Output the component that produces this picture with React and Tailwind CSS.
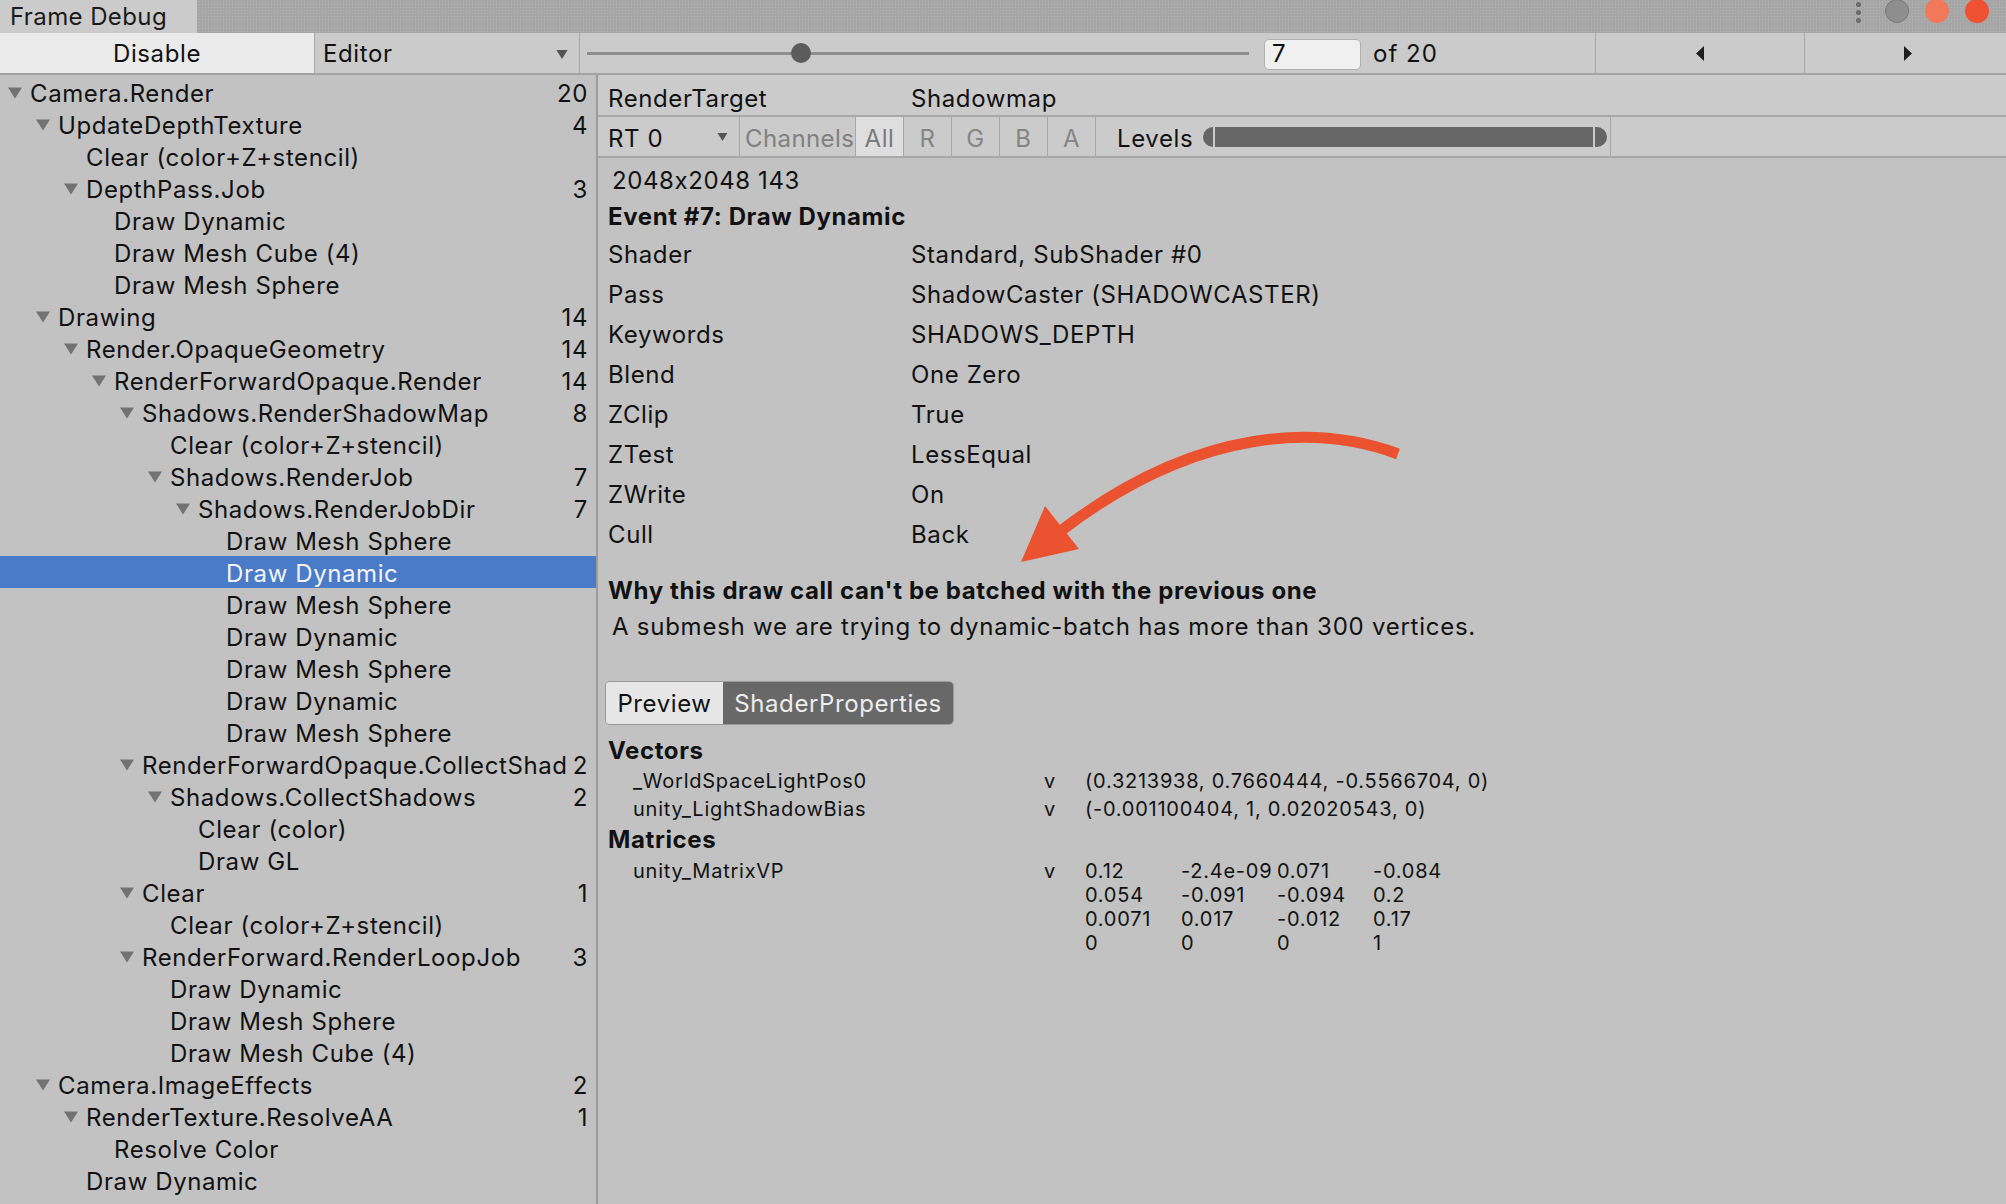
import React from 'react';

const rows = [
  { label: 'Camera.Render', level: 0, arrow: true, count: 20 },
  { label: 'UpdateDepthTexture', level: 1, arrow: true, count: 4 },
  { label: 'Clear (color+Z+stencil)', level: 2 },
  { label: 'DepthPass.Job', level: 2, arrow: true, count: 3 },
  { label: 'Draw Dynamic', level: 3 },
  { label: 'Draw Mesh Cube (4)', level: 3 },
  { label: 'Draw Mesh Sphere', level: 3 },
  { label: 'Drawing', level: 1, arrow: true, count: 14 },
  { label: 'Render.OpaqueGeometry', level: 2, arrow: true, count: 14 },
  { label: 'RenderForwardOpaque.Render', level: 3, arrow: true, count: 14 },
  { label: 'Shadows.RenderShadowMap', level: 4, arrow: true, count: 8 },
  { label: 'Clear (color+Z+stencil)', level: 5 },
  { label: 'Shadows.RenderJob', level: 5, arrow: true, count: 7 },
  { label: 'Shadows.RenderJobDir', level: 6, arrow: true, count: 7 },
  { label: 'Draw Mesh Sphere', level: 7 },
  { label: 'Draw Dynamic', level: 7, selected: true },
  { label: 'Draw Mesh Sphere', level: 7 },
  { label: 'Draw Dynamic', level: 7 },
  { label: 'Draw Mesh Sphere', level: 7 },
  { label: 'Draw Dynamic', level: 7 },
  { label: 'Draw Mesh Sphere', level: 7 },
  { label: 'RenderForwardOpaque.CollectShadows', level: 4, arrow: true, count: 2 },
  { label: 'Shadows.CollectShadows', level: 5, arrow: true, count: 2 },
  { label: 'Clear (color)', level: 6 },
  { label: 'Draw GL', level: 6 },
  { label: 'Clear', level: 4, arrow: true, count: 1 },
  { label: 'Clear (color+Z+stencil)', level: 5 },
  { label: 'RenderForward.RenderLoopJob', level: 4, arrow: true, count: 3 },
  { label: 'Draw Dynamic', level: 5 },
  { label: 'Draw Mesh Sphere', level: 5 },
  { label: 'Draw Mesh Cube (4)', level: 5 },
  { label: 'Camera.ImageEffects', level: 1, arrow: true, count: 2 },
  { label: 'RenderTexture.ResolveAA', level: 2, arrow: true, count: 1 },
  { label: 'Resolve Color', level: 3 },
  { label: 'Draw Dynamic', level: 2 },
];

// indent spacer per tree level (28px per level)
const indents = ['w-[8px]', 'w-[36px]', 'w-[64px]', 'w-[92px]', 'w-[120px]', 'w-[148px]', 'w-[176px]', 'w-[204px]'];

const details = [
  ['Shader', 'Standard, SubShader #0'],
  ['Pass', 'ShadowCaster (SHADOWCASTER)'],
  ['Keywords', 'SHADOWS_DEPTH'],
  ['Blend', 'One Zero'],
  ['ZClip', 'True'],
  ['ZTest', 'LessEqual'],
  ['ZWrite', 'On'],
  ['Cull', 'Back'],
];

const matrix = [
  ['0.12', '-2.4e-09', '0.071', '-0.084'],
  ['0.054', '-0.091', '-0.094', '0.2'],
  ['0.0071', '0.017', '-0.012', '0.17'],
  ['0', '0', '0', '1'],
];

const DownTri = ({ className = '' }) => (
  <svg className={className} viewBox="0 0 10 8">
    <path d="M0 0 L10 0 L5 8 Z" fill="currentColor" />
  </svg>
);

const TreeRow = ({ row }) => (
  <div
    className={`flex items-center h-[32px] pt-[4px] pr-[8px] ${
      row.selected ? 'bg-[#4a7bc8] text-[#f4f4f4]' : 'text-[#111]'
    }`}
  >
    <div className={`shrink-0 ${indents[row.level]}`} />
    <div className="w-[22px] shrink-0 flex items-center -mt-[3px]">
      {row.arrow && <DownTri className="w-[14px] h-[12px] text-[#727272]" />}
    </div>
    <div className="flex-1 min-w-0 overflow-hidden whitespace-nowrap leading-[28px]">{row.label}</div>
    {row.count !== undefined && <div className="shrink-0 pl-[6px] text-right">{row.count}</div>}
  </div>
);

const ChannelBtn = ({ label, active }) => (
  <div
    className={`w-[48px] h-full pt-[5px] flex items-center justify-center border-l border-[#a8a8a8] ${
      active ? 'bg-[#dedede] text-[#7a7a7a]' : 'text-[#858585]'
    }`}
  >
    {label}
  </div>
);

export default function App() {
  return (
    <div
      className="w-[2006px] h-[1204px] overflow-hidden bg-[#c2c2c2] text-[24px] text-[#111] leading-none tracking-[0.6px] [font-feature-settings:'calt'_0]"
      style={{ fontFamily: 'Inter, "Noto Sans", sans-serif' }}
    >
      {/* window title bar */}
      <div className="flex h-[33px] bg-[#a6a6a6] bg-[radial-gradient(#b4b4b4_0.6px,transparent_0.8px)] bg-[length:3px_3px]">
        <div className="w-[197px] bg-[#cbcbcb] flex items-center pl-[10px] text-[#1a1a1a] tracking-[0.4px]">Frame Debug</div>
        <div className="flex-1" />
        <div className="flex items-start pr-[17px]">
          <div className="flex flex-col gap-[3px] pt-[2px] mr-[24px]">
            <div className="w-[5px] h-[5px] rounded-full bg-[#6a6a6a]" />
            <div className="w-[5px] h-[5px] rounded-full bg-[#6a6a6a]" />
            <div className="w-[5px] h-[5px] rounded-full bg-[#6a6a6a]" />
          </div>
          <div className="w-[24px] h-[24px] -mt-[1px] rounded-full bg-[#8e8e8e] border border-[#7a7a7a]" />
          <div className="w-[24px] h-[24px] -mt-[1px] ml-[16px] rounded-full bg-[#f2785a]" />
          <div className="w-[24px] h-[24px] -mt-[1px] ml-[16px] rounded-full bg-[#ee5232]" />
        </div>
      </div>

      {/* toolbar */}
      <div className="flex h-[42px] bg-[#cbcbcb] border-b-2 border-[#a3a3a3]">
        <div className="w-[315px] pt-[2px] bg-[#ebebeb] flex items-center justify-center border-r border-[#a8a8a8]">Disable</div>
        <div className="w-[265px] pt-[2px] flex items-center justify-between pl-[8px] pr-[11px] border-r border-[#a8a8a8]">
          <span>Editor</span>
          <DownTri className="w-[12px] h-[9px] text-[#555]" />
        </div>
        <div className="w-[676px] flex items-center px-[7px]">
          <div className="relative flex-1 h-[3px] bg-[#8e8e8e]">
            <div className="absolute left-[204px] -top-[9px] w-[20px] h-[20px] rounded-full bg-[#5c5c5c]" />
          </div>
        </div>
        <div className="flex items-center pt-[2px]">
          <div className="w-[97px] h-[31px] ml-[8px] rounded-[5px] bg-[#f0f0f0] border border-[#b0b0b0] flex items-center pl-[7px]">7</div>
          <span className="ml-[12px] tracking-[1px]">of 20</span>
        </div>
        <div className="flex-1" />
        <div className="w-[209px] flex items-center justify-center border-l border-[#a8a8a8]">
          <svg className="w-[8px] h-[15px]" viewBox="0 0 8 15">
            <path d="M8 0 L8 15 L0 7.5 Z" fill="#1e1e1e" />
          </svg>
        </div>
        <div className="w-[202px] flex items-center justify-center border-l border-[#a8a8a8]">
          <svg className="w-[8px] h-[15px] ml-[4px]" viewBox="0 0 8 15">
            <path d="M0 0 L0 15 L8 7.5 Z" fill="#1e1e1e" />
          </svg>
        </div>
      </div>

      <div className="flex h-[1129px]">
        {/* event tree */}
        <div className="w-[598px] shrink-0 pt-[1px] border-r-2 border-[#9c9c9c] overflow-hidden">
          {rows.map((row, i) => (
            <TreeRow key={i} row={row} />
          ))}
        </div>

        {/* event details */}
        <div className="relative flex-1 min-w-0">
          <div className="flex items-center h-[42px] pt-[8px] bg-[#cbcbcb] border-b-2 border-[#a8a8a8] pl-[10px]">
            <div className="w-[303px]">RenderTarget</div>
            <div>Shadowmap</div>
          </div>
          <div className="flex h-[41px] bg-[#cbcbcb] border-b-2 border-[#a8a8a8]">
            <div className="w-[142px] pt-[5px] flex items-center justify-between pl-[10px] pr-[11px] border-r border-[#a8a8a8]">
              <span>RT 0</span>
              <DownTri className="w-[11px] h-[8px] -mt-[4px] text-[#555]" />
            </div>
            <div className="w-[115px] pt-[5px] flex items-center pl-[5px] text-[#808080] tracking-[0.4px]">Channels</div>
            <ChannelBtn label="All" active />
            <ChannelBtn label="R" />
            <ChannelBtn label="G" />
            <ChannelBtn label="B" />
            <ChannelBtn label="A" />
            <div className="w-[516px] flex items-center pl-[21px] border-l border-[#a8a8a8] border-r">
              <span className="w-[86px] pt-[5px]">Levels</span>
              <div className="w-[10px] h-[20px] rounded-l-full bg-[#666]" />
              <div className="w-[378px] h-[20px] ml-[2px] bg-[#666]" />
              <div className="w-[12px] h-[20px] ml-[2px] rounded-r-full bg-[#666]" />
            </div>
          </div>

          <div className="pl-[10px]">
            <div className="h-[40px] pt-[5px] flex items-center pl-[4px]">2048x2048 143</div>
            <div className="h-[36px] pt-[2px] flex items-center font-bold">Event #7: Draw Dynamic</div>
            {details.map(([k, v]) => (
              <div key={k} className="h-[40px] pt-[2px] flex items-center">
                <div className="w-[303px]">{k}</div>
                <div>{v}</div>
              </div>
            ))}
            <div className="h-[40px] mt-[16px] pt-[2px] flex items-center font-bold">
              Why this draw call can't be batched with the previous one
            </div>
            <div className="h-[32px] pt-[2px] flex items-center pl-[4px] tracking-[0.75px]">
              A submesh we are trying to dynamic-batch has more than 300 vertices.
            </div>

            <div className="flex mt-[39px] h-[44px] w-[349px] -ml-[3px] rounded-[5px] border border-[#9a9a9a] overflow-hidden">
              <div className="w-[117px] pt-[2px] flex items-center justify-center bg-[#e6e6e6]">Preview</div>
              <div className="flex-1 pt-[2px] flex items-center justify-center bg-[#686868] text-[#ededed]">ShaderProperties</div>
            </div>

            <div className="h-[30px] mt-[10px] pt-[2px] flex items-center font-bold">Vectors</div>
            <div className="text-[20px] tracking-[0.75px]">
              <div className="h-[28px] pt-[4px] flex items-center pl-[25px]">
                <div className="w-[411px]">_WorldSpaceLightPos0</div>
                <div className="w-[41px]">v</div>
                <div>(0.3213938, 0.7660444, -0.5566704, 0)</div>
              </div>
              <div className="h-[28px] pt-[4px] flex items-center pl-[25px]">
                <div className="w-[411px]">unity_LightShadowBias</div>
                <div className="w-[41px]">v</div>
                <div>(-0.001100404, 1, 0.02020543, 0)</div>
              </div>
            </div>
            <div className="h-[36px] pt-[2px] flex items-center font-bold">Matrices</div>
            <div className="flex text-[20px] tracking-[0.75px] pl-[25px]">
              <div className="w-[411px] h-[24px] pt-[4px] flex items-center">unity_MatrixVP</div>
              <div className="w-[41px] h-[24px] pt-[4px] flex items-center">v</div>
              <div>
                {matrix.map((r, i) => (
                  <div key={i} className="flex h-[24px] pt-[4px] items-center">
                    {r.map((c, j) => (
                      <div key={j} className="w-[96px]">{c}</div>
                    ))}
                  </div>
                ))}
              </div>
            </div>
          </div>

          {/* red annotation arrow drawn over the panel */}
          <svg className="absolute left-0 top-0 pointer-events-none" width="1408" height="700" viewBox="598 75 1408 700">
            <path d="M1398 454 C1320 425, 1200 425, 1062 530" fill="none" stroke="#eb5230" strokeWidth="11" />
            <path d="M1021 562 L1045 506 L1079 549 Z" fill="#eb5230" />
          </svg>
        </div>
      </div>
    </div>
  );
}
